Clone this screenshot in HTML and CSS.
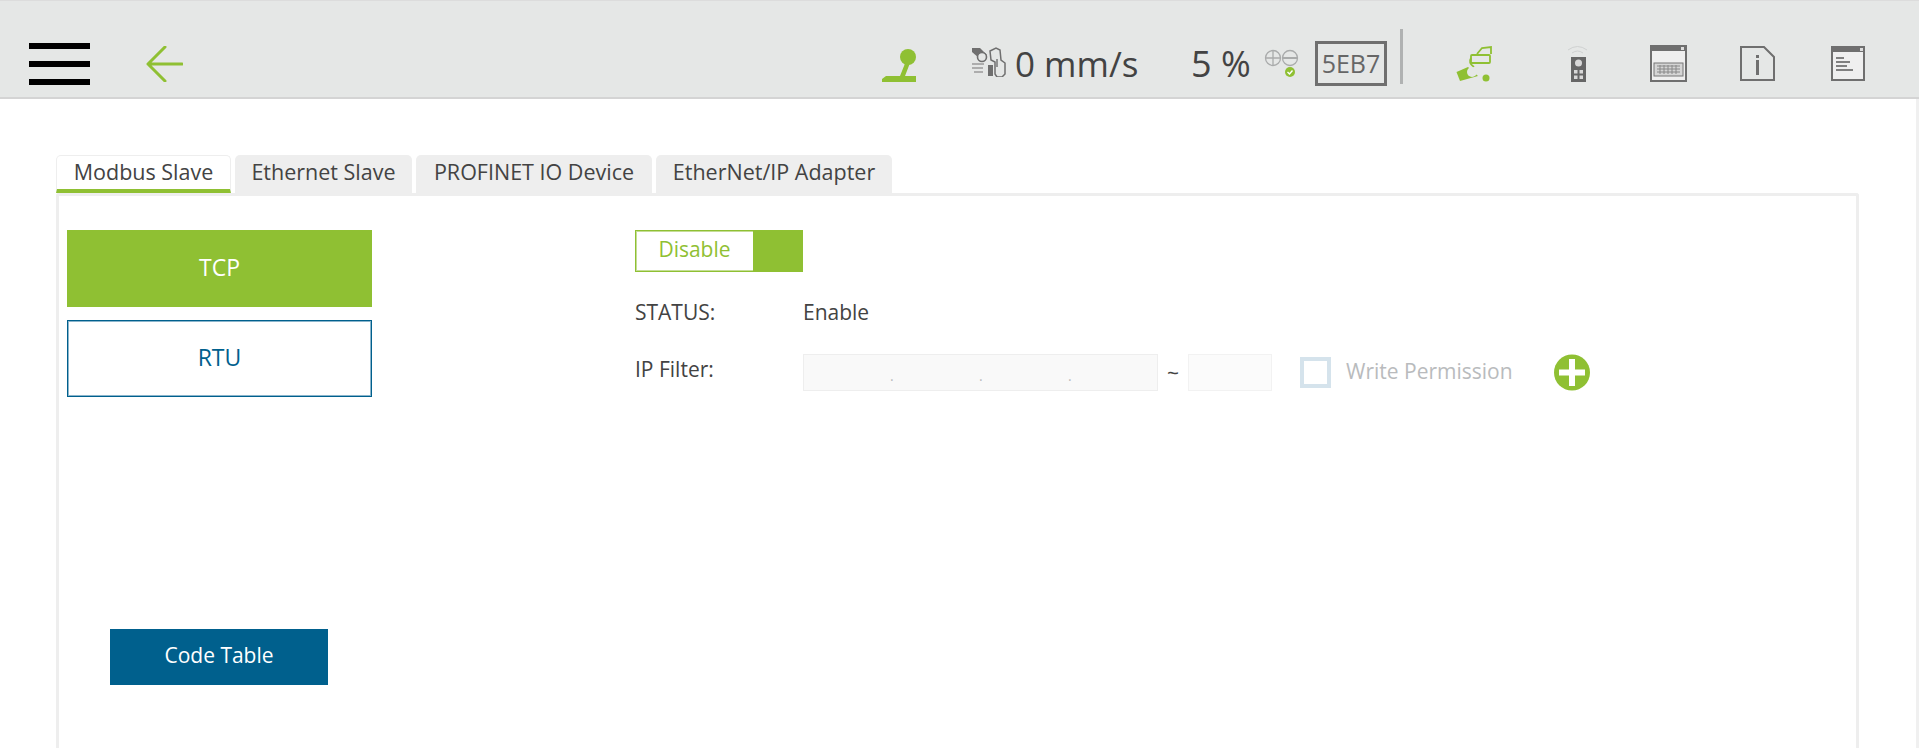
FILE: index.html
```html
<!DOCTYPE html>
<html lang="en">

<head>
    <meta charset="UTF-8">
    <meta name="viewport" content="width=device-width, initial-scale=1.0">
    <title>Modbus Slave</title>
    <link rel="stylesheet" href="styles.css">
</head>

<body>

    <header class="topbar">
        <div class="hamburger"><span></span><span></span><span></span></div>

        <svg class="icon back" width="37" height="36" viewBox="0 0 37 36" fill="none" stroke="#8fc033" stroke-width="3" stroke-linecap="round" stroke-linejoin="round">
            <path d="M36 18H2M19 1L2 18l17 17" />
        </svg>

        <svg class="icon joystick" width="34" height="33" viewBox="0 0 34 33">
            <circle cx="26" cy="8" r="8" fill="#8fc033" />
            <path d="M24 12l4 2-5 13h-5zM4 27h28l2 0v6H0v-3z" fill="#8fc033" />
        </svg>

        <svg class="icon speed-icon" width="35" height="30" viewBox="0 0 35 30">
            <path d="M1 1h8l7 7-4 5-4-2-7-6z" fill="#6f6f6f" />
            <circle cx="11" cy="10" r="4.5" fill="#e5e7e6" stroke="#6f6f6f" stroke-width="1.6" />
            <path d="M1 17h12M1 21h11M3 25h9" stroke="#9a9a9a" stroke-width="1.4" />
            <path d="M17 18h5v11h-5z" fill="#6f6f6f" />
            <path d="M19 4l6-3 4 2 1 10 4 3v11l-3 3h-5l-2-3V15l-4-2z" fill="#e5e7e6" stroke="#6f6f6f" stroke-width="1.5" />
            <path d="M26 12v8" stroke="#6f6f6f" stroke-width="1.4" />
        </svg>

        <span class="speed-val">0 mm/s</span>
        <span class="percent">5 %</span>

        <svg class="icon plus-minus" width="35" height="30" viewBox="0 0 35 30" fill="none" stroke="#a9abab" stroke-width="1.3">
            <circle cx="9" cy="9" r="7.5" />
            <path d="M2 9h14M9 2v14" />
            <circle cx="26" cy="9" r="7.5" />
            <path d="M19 9h14" stroke-width="2" />
            <circle cx="26" cy="23" r="5" fill="#8fc033" stroke="none" />
            <path d="M23.500 23l2 2 3-3.500" stroke="#fff" stroke-width="1.4" />
        </svg>

        <div class="code-box">5EB7</div>
        <div class="divider"></div>

        <svg class="icon robot" width="36" height="36" viewBox="0 0 36 36" fill="none" stroke="#8fc033" stroke-width="1.800">
            <path d="M21 8l5-6 9-1v7" />
            <rect x="15" y="9" width="19" height="8" rx="1" />
            <path d="M15 12q-3 5 3 9" />
            <path d="M0.500 26L12 21l10 9-18 5z" fill="#8fc033" stroke="none" />
            <circle cx="16" cy="26" r="5" fill="#e5e7e6" stroke="none" />
            <circle cx="30" cy="32" r="3.500" fill="#8fc033" stroke="none" />
        </svg>

        <svg class="icon remote" width="21" height="37" viewBox="0 0 21 37">
            <path d="M1 5q9.500-7 19 0M5 8q5.500-4 11 0" fill="none" stroke="#cfd1d1" stroke-width="1" />
            <rect x="4" y="12" width="15" height="25" fill="#666" />
            <circle cx="11.500" cy="18" r="3.500" fill="#d8d8d8" />
            <rect x="7" y="25" width="3.500" height="3.500" fill="#d8d8d8" />
            <rect x="12.500" y="25" width="3.500" height="3.500" fill="#d8d8d8" />
            <rect x="7" y="30.500" width="3.500" height="3.500" fill="#d8d8d8" />
            <rect x="12.500" y="30.500" width="3.500" height="3.500" fill="#d8d8d8" />
        </svg>

        <svg class="icon keyboard" width="37" height="37" viewBox="0 0 37 37">
            <rect x="1" y="1" width="35" height="35" fill="#efefef" stroke="#6f6f6f" stroke-width="2" />
            <rect x="1" y="1" width="35" height="5" fill="#6f6f6f" />
            <rect x="31" y="2" width="3" height="3" fill="#ddd" />
            <rect x="4" y="18" width="29" height="13" fill="#d5d5d5" stroke="#777" stroke-width="1" />
            <path d="M7 21h23M7 24h23M7 27h23M10 20v9M14 20v9M18 20v9M22 20v9M26 20v9" stroke="#888" stroke-width="1" />
        </svg>

        <svg class="icon info" width="35" height="35" viewBox="0 0 35 35" fill="none" stroke="#6f6f6f" stroke-width="2">
            <path d="M1 1h23l10 10v23H1z" fill="#e5e7e6" />
            <path d="M17.500 14v15" stroke-width="3" />
            <path d="M17.500 9v3" stroke-width="3" />
        </svg>

        <svg class="icon log" width="34" height="35" viewBox="0 0 34 35">
            <rect x="1" y="1" width="32" height="33" fill="#efefef" stroke="#6f6f6f" stroke-width="2" />
            <rect x="1" y="1" width="32" height="5" fill="#6f6f6f" />
            <rect x="29" y="2" width="3" height="3" fill="#ddd" />
            <path d="M5 12h8M5 16h14M5 20h11M5 24h17" stroke="#808080" stroke-width="2" />
        </svg>
    </header>

    <main class="page">
        <div class="tabs">
            <div class="tab active">Modbus Slave</div>
            <div class="tab">Ethernet Slave</div>
            <div class="tab">PROFINET IO Device</div>
            <div class="tab">EtherNet/IP Adapter</div>
        </div>

        <div class="panel">
            <div class="side">
                <button class="mode mode-on">TCP</button>
                <button class="mode mode-off">RTU</button>
                <button class="code-table">Code Table</button>
            </div>

            <div class="settings">
                <div class="toggle">
                    <span class="toggle-label">Disable</span>
                    <span class="toggle-knob"></span>
                </div>

                <div class="row status-row">
                    <span class="row-label">STATUS:</span>
                    <span>Enable</span>
                </div>

                <div class="row filter-row">
                    <span class="row-label">IP Filter:</span>
                    <div class="ip-box">
                        <span>.</span><span>.</span><span>.</span>
                    </div>
                    <span class="tilde">~</span>
                    <div class="ip-end"></div>
                    <span class="check"></span>
                    <span class="permission">Write Permission</span>
                    <svg class="add" width="36" height="37" viewBox="0 0 36 37">
                        <circle cx="18" cy="18.500" r="18" fill="#8fc033" />
                        <path d="M15 5h6v10.500h10v6H21V32h-6V21.500H5v-6h10z" fill="#fff" />
                    </svg>
                </div>
            </div>
        </div>
    </main>

</body>

</html>
```

FILE: styles.css
```css
body {
    font-family: 'Open Sans', 'Noto Sans', sans-serif;
    background-color: #ffffff;
    color: #434343;
    margin: 0;
    height: 748px;
    overflow: hidden;
    display: flex;
    flex-direction: column;
}

/* Top bar */
.topbar {
    box-sizing: border-box;
    height: 99px;
    flex: none;
    display: flex;
    align-items: center;
    background-color: #e5e7e6;
    border-top: 1px solid #dcdcdc;
    border-bottom: 2px solid #d4d4d4;
    padding: 29px 54px 0 29px;
}

.icon {
    flex: none;
    display: block;
}

.hamburger {
    width: 61px;
    display: flex;
    flex-direction: column;
    gap: 12px;
}

.hamburger span {
    display: block;
    height: 6px;
    background-color: #000;
}

.back {
    margin-left: 56px;
}

.joystick {
    margin-left: auto;
    margin-top: 3px;
}

.speed-icon {
    margin-left: 55px;
    margin-top: -3px;
}

.speed-val {
    margin-left: 9px;
    width: 121px;
    font-size: 35px;
    white-space: nowrap;
}

.percent {
    margin-left: 55px;
    width: 59px;
    font-size: 36px;
    white-space: nowrap;
}

.plus-minus {
    margin-left: 14px;
}

.code-box {
    box-sizing: border-box;
    margin-left: 16px;
    width: 72px;
    height: 45px;
    border: 3px solid #6f6f6f;
    font-size: 25px;
    line-height: 38px;
    text-align: center;
    color: #666;
}

.divider {
    margin-left: 13px;
    width: 3px;
    height: 55px;
    margin-top: -15px;
    background-color: #b0b2b2;
}

.robot {
    margin-left: 53px;
}

.remote {
    margin-left: 75px;
}

.keyboard {
    margin-left: 62px;
}

.info {
    margin-left: 53px;
}

.log {
    margin-left: 56px;
}

/* Page body */
.page {
    flex: 1;
    min-height: 0;
    display: flex;
    flex-direction: column;
    padding: 56px 57px 0 56px;
    border-right: 3px solid #f0f0f0;
}

.tabs {
    display: flex;
    gap: 4px;
    height: 38px;
}

.tab {
    box-sizing: border-box;
    background-color: #eeeeee;
    border-radius: 5px 5px 0 0;
    font-size: 21.5px;
    line-height: 33px;
    text-align: center;
    white-space: nowrap;
}

.tab:nth-child(1) {
    width: 175px;
}

.tab:nth-child(2) {
    width: 177px;
}

.tab:nth-child(3) {
    width: 236px;
}

.tab:nth-child(4) {
    width: 236px;
}

.tab.active {
    background-color: #ffffff;
    border: 1px solid #eeeeee;
    border-bottom: 4px solid #8fc033;
    line-height: 31px;
}

.panel {
    flex: 1;
    display: flex;
    gap: 263px;
    border: 3px solid #eeeeee;
    border-bottom: none;
    border-radius: 3px 3px 0 0;
    padding: 34px 8px 0;
}

.side {
    width: 305px;
    flex: none;
    display: flex;
    flex-direction: column;
    align-items: flex-start;
}

button {
    font-family: inherit;
    border: none;
    cursor: pointer;
}

.mode {
    box-sizing: border-box;
    width: 305px;
    height: 77px;
    font-size: 23px;
    padding: 0 0 4px;
}

.mode-on {
    background-color: #8fc033;
    color: #fff;
}

.mode-off {
    margin-top: 13px;
    background-color: #fff;
    color: #00608d;
    border: 1px solid #00608d;
    box-shadow: inset 0 0 0 1px #8ab5cc;
}

.code-table {
    margin: 232px 0 0 43px;
    width: 218px;
    height: 56px;
    background-color: #00608d;
    color: #fff;
    font-size: 21px;
    padding: 0 0 4px;
}

/* Settings column */
.settings {
    font-size: 21px;
}

.toggle {
    box-sizing: border-box;
    width: 168px;
    height: 42px;
    display: flex;
    border: 1px solid #8fc033;
    box-shadow: inset 0 0 0 1px #c5dd96;
}

.toggle-label {
    width: 117px;
    line-height: 36px;
    text-align: center;
    color: #8fc033;
}

.toggle-knob {
    flex: 1;
    background-color: #8fc033;
}

.row {
    display: flex;
}

.row-label {
    width: 168px;
    flex: none;
}

.status-row {
    margin-top: 26px;
    line-height: 28px;
}

.filter-row {
    margin-top: 28px;
    align-items: center;
}

.filter-row .row-label {
    margin-top: -8px;
}

.ip-box {
    box-sizing: border-box;
    width: 355px;
    height: 37px;
    display: flex;
    padding-left: 86px;
    background-color: #f9f9f9;
    border: 1px solid #eeeeee;
    color: #b9bbbd;
    font-size: 14px;
    line-height: 42px;
}

.ip-box span {
    width: 89px;
}

.tilde {
    width: 30px;
    text-align: center;
    font-size: 21px;
}

.ip-end {
    box-sizing: border-box;
    width: 84px;
    height: 37px;
    background-color: #fbfbfb;
    border: 1px solid #f2f2f2;
}

.check {
    box-sizing: border-box;
    margin-left: 28px;
    width: 31px;
    height: 31px;
    border: 4px solid #d5e3ec;
}

.permission {
    margin-left: 15px;
    margin-top: -3px;
    width: 208px;
    color: #b9bbbd;
    white-space: nowrap;
}

.add {
    flex: none;
}
```
